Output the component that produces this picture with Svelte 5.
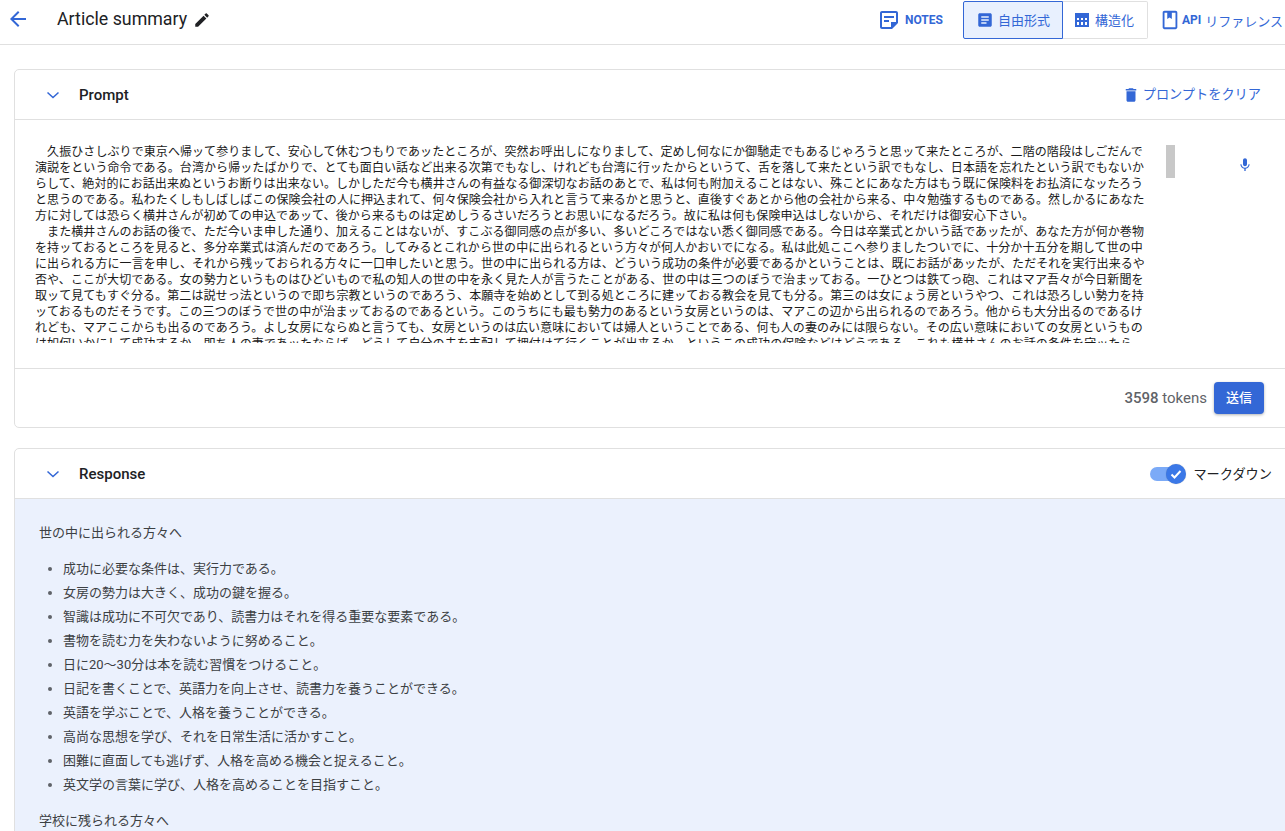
<script>
  const prompt = [
    '　久振ひさしぶりで東京へ帰ッて参りまして、安心して休むつもりであッたところが、突然お呼出しになりまして、定めし何なにか御馳走でもあるじゃろうと思ッて来たところが、二階の階段はしごだんで',
    '演説をという命令である。台湾から帰ッたばかりで、とても面白い話など出来る次第でもなし、けれども台湾に行ッたからというて、舌を落して来たという訳でもなし、日本語を忘れたという訳でもないか',
    'らして、絶対的にお話出来ぬというお断りは出来ない。しかしただ今も横井さんの有益なる御深切なお話のあとで、私は何も附加えることはない、殊ことにあなた方はもう既に保険料をお払済になッたろう',
    'と思うのである。私わたくしもしばしばこの保険会社の人に押込まれて、何々保険会社から入れと言うて来るかと思うと、直後すぐあとから他の会社から来る、中々勉強するものである。然しかるにあなた',
    '方に対しては恐らく横井さんが初めての申込であッて、後から来るものは定めしうるさいだろうとお思いになるだろう。故に私は何も保険申込はしないから、それだけは御安心下さい。',
    '　また横井さんのお話の後で、ただ今いま申した通り、加えることはないが、すこぶる御同感の点が多い、多いどころではない悉く御同感である。今日は卒業式とかいう話であッたが、あなた方が何か巻物',
    'を持ッておるところを見ると、多分卒業式は済んだのであろう。してみるとこれから世の中に出られるという方々が何人かおいでになる。私は此処ここへ参りましたついでに、十分か十五分を期して世の中',
    'に出られる方に一言を申し、それから残ッておられる方々に一口申したいと思う。世の中に出られる方は、どういう成功の条件が必要であるかということは、既にお話があッたが、ただそれを実行出来るや',
    '否や、ここが大切である。女の勢力というものはひどいもので私の知人の世の中を永く見た人が言うたことがある、世の中は三つのぼうで治まッておる。一ひとつは鉄てっ砲、これはマア吾々が今日新聞を',
    '取ッて見てもすぐ分る。第二は説せっ法というので即ち宗教というのであろう、本願寺を始めとして到る処ところに建ッておる教会を見ても分る。第三のは女にょう房というやつ、これは恐ろしい勢力を持',
    'ッておるものだそうです。この三つのぼうで世の中が治まッておるのであるという。このうちにも最も勢力のあるという女房というのは、マアこの辺から出られるのであろう。他からも大分出るのであるけ',
    'れども、マアここからも出るのであろう。よし女房にならぬと言うても、女房というのは広い意味においては婦人ということである、何も人の妻のみには限らない。その広い意味においての女房というもの',
    'は如何いかにして成功するか、即ち人の妻であッたならば、どうして自分の夫を支配して押付けて行くことが出来るか、というこの成功の保険などはどうである、これも横井さんのお話の条件を守ッたら'
  ];
  const items = [
    '成功に必要な条件は、実行力である。',
    '女房の勢力は大きく、成功の鍵を握る。',
    '智識は成功に不可欠であり、読書力はそれを得る重要な要素である。',
    '書物を読む力を失わないように努めること。',
    '日に20～30分は本を読む習慣をつけること。',
    '日記を書くことで、英語力を向上させ、読書力を養うことができる。',
    '英語を学ぶことで、人格を養うことができる。',
    '高尚な思想を学び、それを日常生活に活かすこと。',
    '困難に直面しても逃げず、人格を高める機会と捉えること。',
    '英文学の言葉に学び、人格を高めることを目指すこと。'
  ];
</script>

<div class="page">
  <header class="toolbar">
    <svg class="back" viewBox="0 0 24 24"><path d="M20 11H7.83l5.59-5.59L12 4l-8 8 8 8 1.41-1.41L7.83 13H20v-2z"/></svg>
    <h1>Article summary</h1>
    <svg class="pencil" viewBox="0 0 24 24"><path d="M3 17.25V21h3.75L17.81 9.94l-3.75-3.75L3 17.25zM20.71 7.04c.39-.39.39-1.02 0-1.41l-2.34-2.34c-.39-.39-1.02-.39-1.41 0l-1.83 1.83 3.75 3.75 1.83-1.83z"/></svg>
    <div class="spacer"></div>
    <button class="notes">
      <svg viewBox="0 0 24 24"><path d="M19 5v9h-5v5H5V5h14m0-2H5C3.9 3 3 3.9 3 5v14c0 1.1.9 2 2 2h10l6-6V5c0-1.1-.9-2-2-2zM12 14H7v-2h5v2zm5-4H7V8h10v2z"/></svg>
      NOTES
    </button>
    <div class="segment">
      <button class="seg active">
        <svg viewBox="0 0 24 24"><path d="M19 3H5c-1.1 0-2 .9-2 2v14c0 1.1.9 2 2 2h14c1.1 0 2-.9 2-2V5c0-1.1-.9-2-2-2zm-5 14H7v-2h7v2zm3-4H7v-2h10v2zm0-4H7V7h10v2z"/></svg>
        <span>自由形式</span>
      </button>
      <button class="seg">
        <svg viewBox="0 0 18 18"><path fill-rule="evenodd" d="M2 2h14v14H2zM4 7v2h2V7zm4 0v2h2V7zm4 0v2h2V7zM4 11v3h2v-3zm4 0v3h2v-3zm4 0v3h2v-3z"/></svg>
        <span>構造化</span>
      </button>
    </div>
    <button class="api">
      <svg viewBox="0 0 24 24"><path d="M18 2H6c-1.1 0-2 .9-2 2v16c0 1.1.9 2 2 2h12c1.1 0 2-.9 2-2V4c0-1.1-.9-2-2-2zm0 18H6V4h3v7l2.5-1.8L14 11V4h4v16z"/></svg>
      <b>API</b><span>リファレンス</span>
    </button>
  </header>

  <main>
    <section class="card prompt-card">
      <div class="card-head">
        <svg class="chev" viewBox="0 0 24 24"><path d="M6.5 9.5L12 14.5l5.500-5"/></svg>
        <h2>Prompt</h2>
        <div class="spacer"></div>
        <button class="clear">
          <svg viewBox="0 0 24 24"><path d="M6 19c0 1.1.9 2 2 2h8c1.1 0 2-.9 2-2V7H6v12zM19 4h-3.5l-1-1h-5l-1 1H5v2h14V4z"/></svg>
          <span>プロンプトをクリア</span>
        </button>
      </div>
      <div class="prompt-body">
        <div class="prompt-text">
          {#each prompt as line}
            <div class="line">{line}</div>
          {/each}
        </div>
        <div class="thumb"></div>
        <svg class="mic" viewBox="0 0 24 24"><path d="M12 14c1.660 0 2.990-1.340 2.990-3L15 5c0-1.660-1.340-3-3-3S9 3.340 9 5v6c0 1.660 1.340 3 3 3zm5.300-3c0 3-2.540 5.100-5.300 5.100S6.700 14 6.700 11H5c0 3.410 2.720 6.230 6 6.720V21h2v-3.280c3.280-.48 6-3.300 6-6.720h-1.700z"/></svg>
      </div>
      <div class="prompt-foot">
        <span class="tokens"><b>3598</b> tokens</span>
        <button class="send">送信</button>
      </div>
    </section>

    <section class="card response-card">
      <div class="card-head">
        <svg class="chev" viewBox="0 0 24 24"><path d="M6.500 9.500L12 14.500l5.500-5"/></svg>
        <h2>Response</h2>
        <div class="spacer"></div>
        <div class="toggle">
          <span class="track"></span>
          <span class="knob">
            <svg viewBox="0 0 20 20"><path d="M5.500 10.500l3 3 6-6.500"/></svg>
          </span>
        </div>
        <span class="md">マークダウン</span>
      </div>
      <div class="response-body">
        <p>世の中に出られる方々へ</p>
        <ul>
          {#each items as item}
            <li>{item}</li>
          {/each}
        </ul>
        <p>学校に残られる方々へ</p>
      </div>
    </section>
  </main>
</div>

<style>
  :global(html), :global(body) {
    margin: 0;
    height: 831px;
    overflow: hidden;
    background: #fff;
  }
  .page {
    width: 1300px;
    font-family: Roboto, "Noto Sans CJK JP", sans-serif;
    color: #202124;
  }
  button {
    font: inherit;
    background: none;
    border: 0;
    padding: 0;
    color: #3367d6;
    display: flex;
    align-items: center;
    white-space: nowrap;
  }
  svg { fill: #3367d6; flex: none; }
  .spacer { flex: 1; }

  .toolbar {
    height: 44px;
    border-bottom: 1px solid #e0e0e0;
    display: flex;
    align-items: flex-start;
    padding-right: 17px;
  }
  .back { width: 24px; height: 24px; margin: 7px 0 0 6px; }
  h1 {
    margin: 8px 0 0 27px;
    font-size: 17.8px;
    line-height: 22px;
    font-weight: 400;
    color: #202124;
  }
  .pencil { width: 18px; height: 18px; margin: 11px 0 0 6px; fill: #202124; }
  .notes {
    height: 40px;
    font-size: 12px;
    font-weight: 700;
    margin-right: 20px;
    gap: 4px;
  }
  .notes svg { width: 24px; height: 24px; }
  .segment { display: flex; margin-right: 11px; margin-top: 1px; }
  .seg {
    height: 38px;
    box-sizing: border-box;
    border: 1px solid #e0e0e0;
    font-size: 13px;
  }
  .seg span { position: relative; top: -1px; }
  .seg.active {
    width: 100px;
    background: #e8f0fe;
    border-color: #3367d6;
    border-radius: 2px 0 0 2px;
    padding-left: 12px;
    gap: 4px;
  }
  .seg:not(.active) {
    width: 85px;
    border-left: 0;
    border-radius: 0 2px 2px 0;
    padding-left: 10px;
    gap: 4px;
  }
  .seg svg { width: 18px; height: 18px; }
  .api { height: 40px; font-size: 13px; }
  .api svg { width: 22px; height: 22px; margin-right: 1px; }
  .api b { margin-right: 4px; font-size: 12px; }

  main { padding: 24px 0 0 14px; }
  .card {
    border: 1px solid #e0e0e0;
    border-radius: 5px;
    overflow: hidden;
    background: #fff;
  }
  .response-card { margin-top: 20px; }
  .card-head {
    height: 49px;
    border-bottom: 1px solid #e0e0e0;
    display: flex;
    align-items: center;
    padding-left: 26px;
    padding-right: 38px;
  }
  .chev {
    width: 24px;
    height: 24px;
    fill: none;
    stroke: #3367d6;
    stroke-width: 1.500;
  }
  h2 {
    margin: 0 0 0 14px;
    font-size: 15px;
    font-weight: 500;
    color: #202124;
  }
  .clear { font-size: 13.2px; gap: 3px; }
  .clear span { position: relative; top: -1px; }
  .clear svg { width: 18px; height: 18px; }

  .prompt-body {
    height: 224px;
    padding: 24px 0 0 20px;
    display: flex;
    align-items: flex-start;
    border-bottom: 1px solid #e0e0e0;
  }
  .prompt-text {
    width: 1112px;
    height: 199px;
    overflow: hidden;
    font-size: 12px;
    letter-spacing: .08px;
    line-height: 16px;
    color: #1a1a1a;
  }
  .line { white-space: nowrap; }
  .thumb {
    width: 9px;
    height: 33px;
    background: #c8c8c8;
    margin: 1px 0 0 19px;
  }
  .mic { width: 16px; height: 16px; margin: 13px 0 0 62px; }

  .prompt-foot {
    height: 58px;
    display: flex;
    justify-content: flex-end;
    align-items: center;
    padding-right: 35px;
    gap: 7px;
  }
  .tokens { font-size: 15px; color: #5f6368; }
  .tokens b { font-weight: 500; }
  .send {
    width: 50px;
    height: 32px;
    justify-content: center;
    background: #3367d6;
    color: #fff;
    font-size: 13px;
    font-weight: 500;
    border-radius: 4px;
    padding-bottom: 3px;
    box-shadow: 0 1px 3px rgba(60, 64, 67, .4);
  }

  .response-card .card-head { padding-right: 27px; }
  .toggle { position: relative; width: 36px; height: 22px; margin-right: 7px; }
  .track {
    position: absolute;
    left: 0;
    top: 4px;
    width: 26px;
    height: 14px;
    border-radius: 7px;
    background: #7baaf7;
  }
  .knob {
    position: absolute;
    left: 16px;
    top: 1px;
    width: 20px;
    height: 20px;
    border-radius: 50%;
    background: #3b78e7;
    box-shadow: 0 0 1px rgba(0, 0, 0, .3);
  }
  .knob svg {
    display: block;
    width: 20px;
    height: 20px;
    fill: none;
    stroke: #fff;
    stroke-width: 2;
  }
  .md { font-size: 13.2px; color: #202124; }

  .response-body {
    background: #ebf1fd;
    padding: 24px 24px 0;
    font-size: 13px;
    line-height: 20px;
    color: #3c4043;
    height: 400px;
  }
  p { margin: 0; }
  ul { margin: 14px 0 14px; padding: 0 0 0 24px; }
  li { height: 24px; line-height: 24px; }
  li::marker { color: #5f6368; }
</style>
